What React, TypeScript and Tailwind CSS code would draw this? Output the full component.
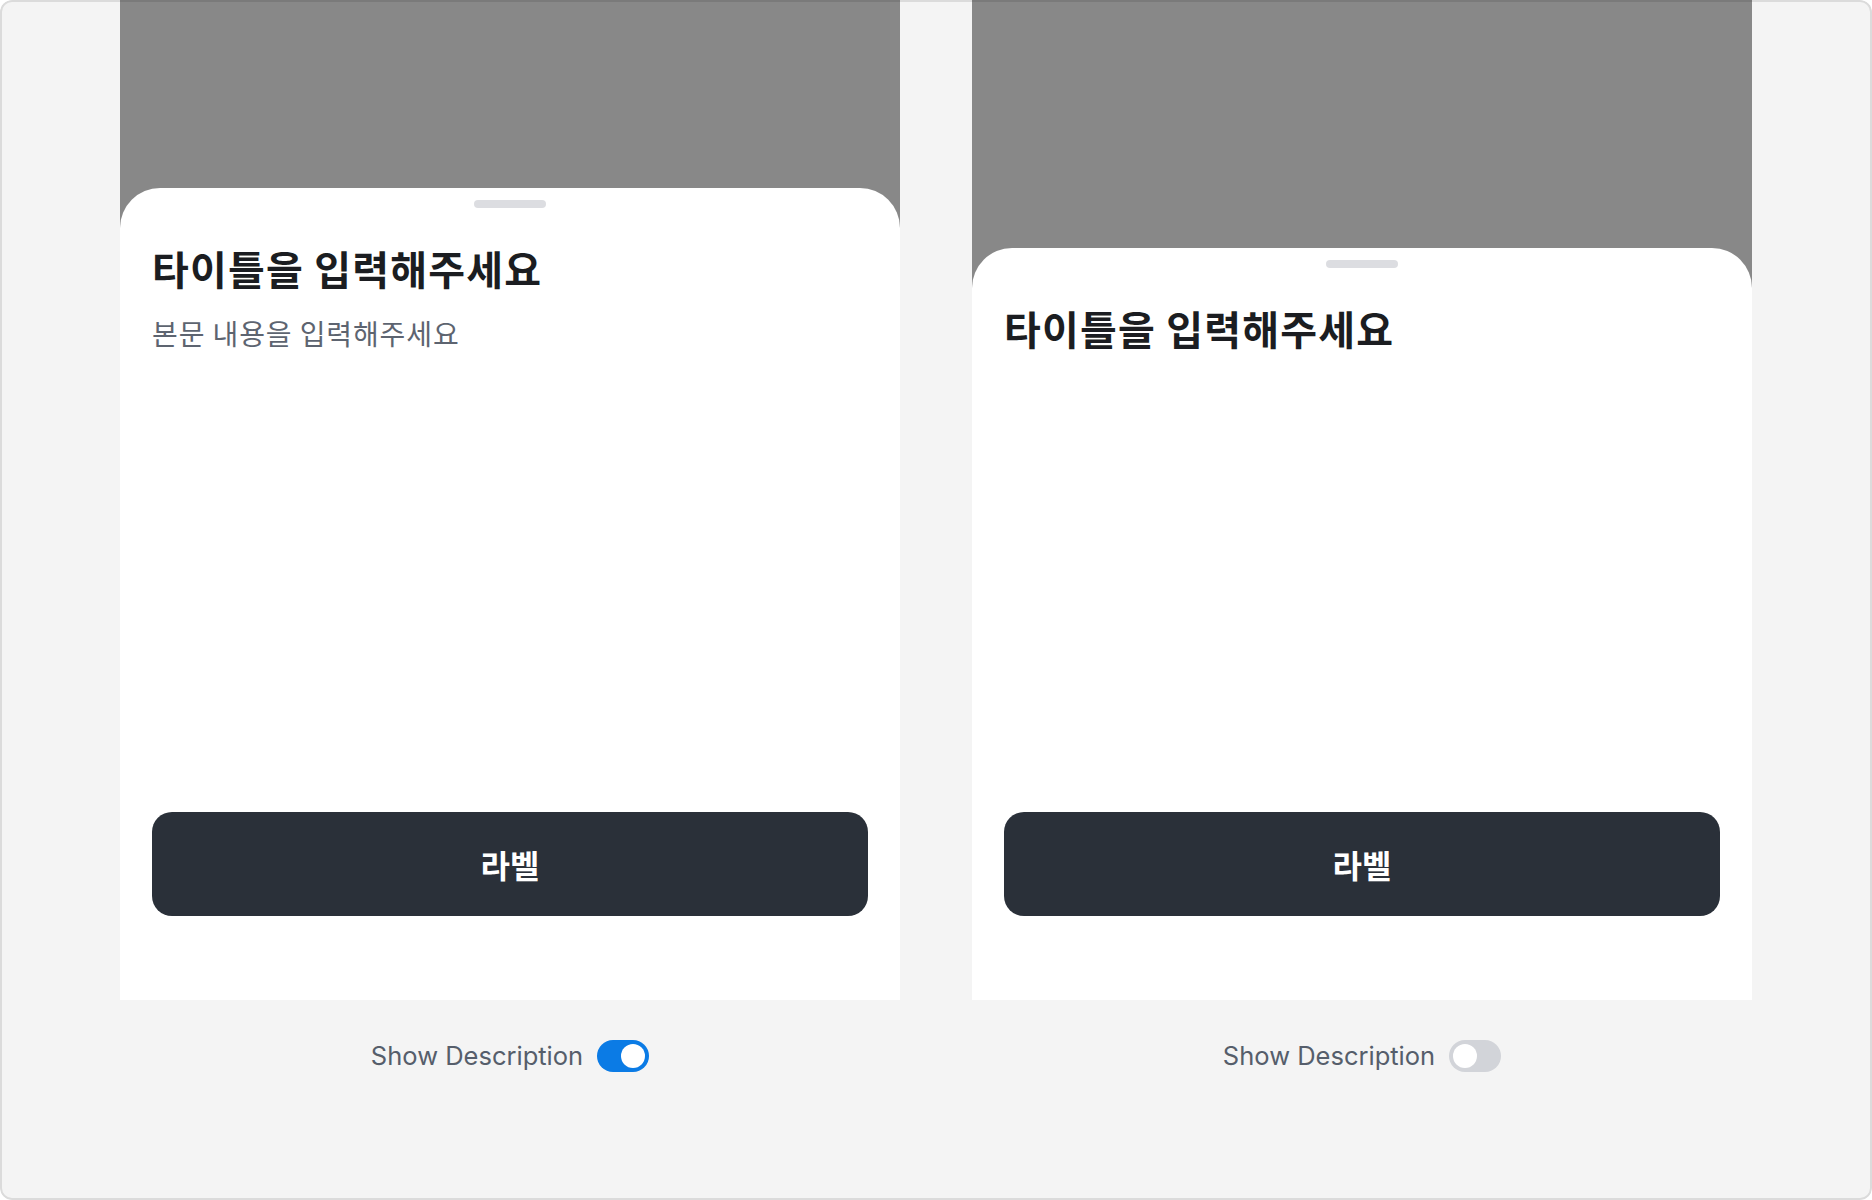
import React from 'react';

const sans = { fontFamily: '"Noto Sans CJK KR", "Noto Sans", sans-serif' };

const Toggle: React.FC<{ on: boolean }> = ({ on }) => (
    <span
        className={`flex h-8 w-[52px] items-center rounded-full p-1 ${
            on ? 'justify-end bg-[#0b7be5]' : 'justify-start bg-[#d2d4d9]'
        }`}
    >
        <span className="h-6 w-6 rounded-full bg-white" />
    </span>
);

const SheetPreview: React.FC<{ showDescription: boolean }> = ({ showDescription }) => (
    <div className="flex w-[780px] flex-col items-center">
        <div className="flex h-[1000px] w-full flex-col bg-[#888888]">
            <div className="flex-1" />
            <div className="flex flex-col rounded-t-[40px] bg-white px-8 pb-[84px]">
                <div className="flex justify-center pt-3">
                    <div className="h-2 w-[72px] rounded-full bg-[#dcdde1]" />
                </div>
                <h2
                    className="mt-[35px] text-[40px] leading-[50px] font-bold tracking-[1.2px] text-[#1b1d21]"
                    style={sans}
                >
                    타이틀을 입력해주세요
                </h2>
                {showDescription ? (
                    <p className="mt-5 text-[28px] leading-[40px] tracking-[0.9px] text-[#5d6470]" style={sans}>
                        본문 내용을 입력해주세요
                    </p>
                ) : null}
                <div className="h-[459px]" />
                <button className="flex h-[104px] w-full items-center justify-center rounded-[20px] bg-[#2a3039]">
                    <span className="text-[32px] font-bold text-white" style={sans}>
                        라벨
                    </span>
                </button>
            </div>
        </div>
        <div className="mt-10 flex items-center gap-3.5">
            <span className="text-[25.5px] leading-8 text-[#565e6b]" style={{ fontFamily: 'Inter, sans-serif' }}>
                Show Description
            </span>
            <Toggle on={showDescription} />
        </div>
    </div>
);

export default function App() {
    return (
        <div className="relative h-[1200px] w-[1872px] overflow-hidden rounded-xl bg-[#f4f4f4]">
            <div className="flex gap-[72px] px-[120px]">
                <SheetPreview showDescription={true} />
                <SheetPreview showDescription={false} />
            </div>
            <div className="pointer-events-none absolute inset-0 rounded-xl border-2 border-black/10" />
        </div>
    );
}
